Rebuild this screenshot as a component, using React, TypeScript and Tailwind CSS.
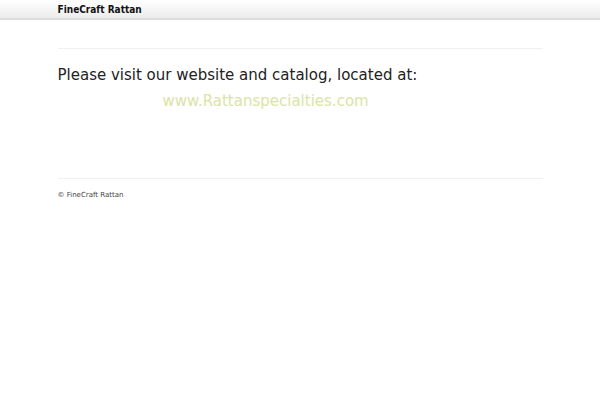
export default function App() {
  return (
    <div className="min-h-[400px] bg-white font-['DejaVu_Sans',sans-serif] text-[#222]">
      <header className="h-[20px] border-b-2 border-[#dcdcdc] bg-gradient-to-b from-white to-[#ececec]">
        <div className="mx-auto w-[485px] pt-[3px] font-['DejaVu_Sans_Condensed','DejaVu_Sans',sans-serif] text-[10px] font-bold leading-[13px] text-[#111]">FineCraft Rattan</div>
      </header>
      <main className="mx-auto w-[485px]">
        <div className="mt-[28px] border-t border-[#f0f0f0]" />
        <h1 className="mt-[16px] text-[15px] leading-[20px] text-[#222]">Please visit our website and catalog, located at:</h1>
        <p className="mt-[6px] pl-[105px] text-[15px] leading-[20px]">
          <a className="text-[#dbe4a6]">www.Rattanspecialties.com</a>
        </p>
        <div className="mt-[67px] border-t border-[#f0f0f0]" />
        <footer className="pt-[11px] text-[7px] leading-[10px] text-[#444]">© FineCraft Rattan</footer>
      </main>
    </div>
  );
}
